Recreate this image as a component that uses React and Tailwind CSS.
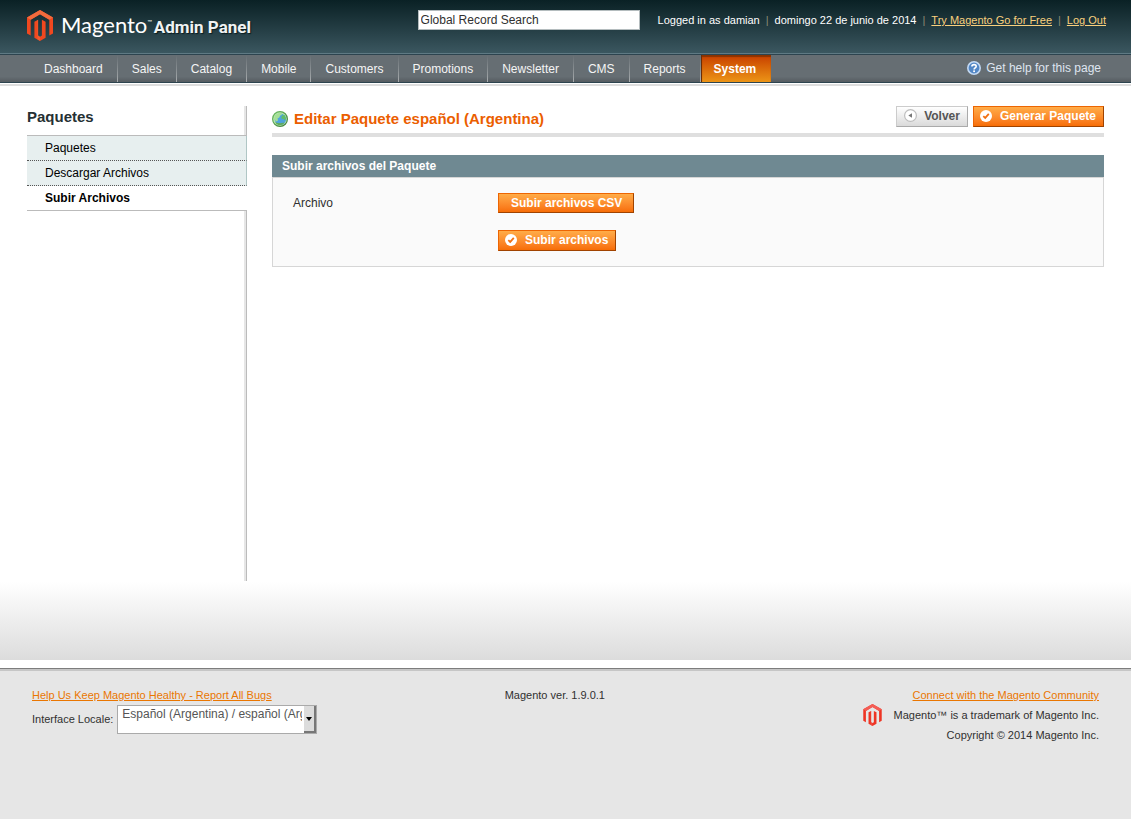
import { useState } from 'react'

const NAV_ITEMS = ['Dashboard', 'Sales', 'Catalog', 'Mobile', 'Customers', 'Promotions', 'Newsletter', 'CMS', 'Reports']

const SIDE_TABS = ['Paquetes', 'Descargar Archivos', 'Subir Archivos']

function MagentoMark({ className, roof, base }) {
  return (
    <svg viewBox="0 0 26 31" className={className} aria-hidden="true">
      <path d="M13 0 26 7.5V23.5L22.3 25.6V9.7L13 4.3 3.7 9.7V25.6L0 23.5V7.5Z" fill={base} />
      <path d="M13 0 26 7.5 22.3 9.7 13 4.3 3.7 9.7 0 7.5Z" fill={roof} />
      <path d="M7.4 11.8 11.1 9.7V25.6L13 26.8 14.9 25.6V9.7L18.6 11.8V27.7L13 31 7.4 27.7Z" fill={base} />
      <path d="M11.1 9.7V25.6L13 26.8V31L10.4 29.5V10.1Z" fill={roof} fillOpacity="0.5" />
    </svg>
  )
}

function GlobeIcon() {
  return (
    <svg viewBox="0 0 16 16" className="h-4 w-4" aria-hidden="true">
      <defs>
        <linearGradient id="globe-rim" x1="0" y1="0" x2="1" y2="1">
          <stop offset="0" stopColor="#6fbf66" />
          <stop offset="1" stopColor="#3c7a3a" />
        </linearGradient>
      </defs>
      <circle cx="8" cy="8" r="7.4" fill="#b9e8ab" stroke="url(#globe-rim)" strokeWidth="1.2" />
      <circle cx="8.4" cy="8.2" r="5.7" fill="#4fa3dc" />
      <path d="M2.5 6C3 3.500 6 1.800 9 2.200L10.300 3.300 8 4.800 7.300 6.500 5.500 7.500 6 9.300 4.800 10.500 2.500 9Z" fill="#a5e096" />
      <path d="M10.500 4.300 12.800 4.300 13.900 7.500 12.800 9.500 11.300 8 9.600 7.800 9.300 6Z" fill="#5fbd6a" />
      <path d="M3 11 5.500 12 8.500 12.300 12.500 11.500 10.800 13.400 7 14.200 4.500 13Z" fill="#62ab58" />
    </svg>
  )
}

function HelpIcon() {
  return (
    <svg viewBox="0 0 14 14" className="h-3.5 w-3.5" aria-hidden="true">
      <circle cx="7" cy="7" r="6.200" fill="#5287c6" stroke="#c3d9f3" strokeWidth="1.600" />
      <path d="M4.900 5.500C4.900 3 9.200 3 9.200 5.300 9.200 6.900 7.100 6.800 7.100 8.500" fill="none" stroke="#fff" strokeWidth="1.600" />
      <rect x="6.200" y="9.400" width="1.800" height="1.700" fill="#fff" />
    </svg>
  )
}

function CheckIcon() {
  return (
    <svg viewBox="0 0 12 12" className="h-3 w-3" aria-hidden="true">
      <circle cx="6" cy="6" r="6" fill="#fff" />
      <path d="M3.300 6.200 5.200 7.900 8.800 3.900" fill="none" stroke="#f27011" strokeWidth="1.800" />
    </svg>
  )
}

function BackIcon() {
  return (
    <svg viewBox="0 0 13 13" className="h-[13px] w-[13px]" aria-hidden="true">
      <circle cx="6.500" cy="6.500" r="5.900" fill="#fff" stroke="#bdbdbd" strokeWidth="1.200" />
      <path d="M4.300 6.500 8 4.200V8.800Z" fill="#777" />
    </svg>
  )
}

function OrangeButton({ icon, children }) {
  return (
    <button
      type="button"
      className={`flex items-center border border-t-[#ed6502] border-l-[#ed6502] border-r-[#a04300] border-b-[#a04300] bg-linear-to-b from-[#ffac47] to-[#f76d04] text-xs font-bold text-white ${
        icon ? 'h-[21px] gap-2 pr-[7px] pb-0.5 pl-1.5' : 'h-5 pr-[11px] pl-3'
      }`}
    >
      {icon}
      {children}
    </button>
  )
}

function Header() {
  const [query, setQuery] = useState('Global Record Search')

  return (
    <header>
      <div className="flex h-[53px] items-start justify-between bg-linear-to-b from-[#0a2125] to-[#3b5760] pr-[25px] pl-[27px]">
        <a href="#" className="flex pt-2.5 whitespace-nowrap text-white">
          <MagentoMark className="h-[31px] w-[26px]" roof="#f26b3d" base="#f1481f" />
          <span className="ml-2 flex items-baseline font-['Lato',sans-serif] text-[22px] leading-[30px]">
            Magento
            <span className="self-start pt-2 text-[6px] leading-2">™</span>
            <span className="ml-0.5 font-['Roboto',sans-serif] text-[17px] font-bold text-[#f0f3f3] text-shadow-[1px_1px_1px_#0a1c20]">
              Admin Panel
            </span>
          </span>
        </a>
        <div className="flex items-start gap-[18px] pt-2.5">
          <input
            aria-label="Global Record Search"
            value={query}
            onChange={(e) => setQuery(e.target.value)}
            className="h-5 w-[222px] border border-[#b4bcbe] bg-white px-0.5 text-xs text-[#303030]"
          />
          <div className="flex items-center gap-1.5 text-[11px] leading-5 whitespace-nowrap text-white">
            <span>Logged in as damian</span>
            <span className="text-[#8b8b74]">|</span>
            <span>domingo 22 de junio de 2014</span>
            <span className="text-[#8b8b74]">|</span>
            <a href="#" className="text-[#f9d07d] underline">Try Magento Go for Free</a>
            <span className="text-[#8b8b74]">|</span>
            <a href="#" className="text-[#f9d07d] underline">Log Out</a>
          </div>
        </div>
      </div>

      <div className="border-t border-[#5f7a84]">
        <nav className="flex h-[29px] items-stretch justify-between border-t border-b border-[#2d444f] bg-linear-to-b from-[#666e73] from-80% to-[#555c61] pr-[30px] pl-[30px] text-xs text-[#f5f5f5]">
          <ul className="flex">
            {NAV_ITEMS.map((item) => (
              <li key={item} className="flex">
                <a href="#" className="flex items-center px-3.5">{item}</a>
                <span className="w-px bg-linear-to-b from-[#666e73] to-[#a9adaf]" />
              </li>
            ))}
            <li className="flex">
              <a
                href="#"
                className="flex items-center border-l border-[#6b2d05] bg-linear-to-b from-[#c63c00] to-[#ec9416] pr-[15px] pl-3 font-bold text-white shadow-[inset_0_2px_1px_#8a3300]"
              >
                System
              </a>
            </li>
          </ul>
          <a href="#" className="flex items-center gap-[5px] pb-0.5 text-[#dfe5f0]">
            <HelpIcon />
            Get help for this page
          </a>
        </nav>
      </div>
      <div className="h-[3px] border-b-2 border-[#dedede] bg-white" />
    </header>
  )
}

function Sidebar() {
  return (
    <aside className="min-h-[475px] w-[220px] shrink-0 border-r border-[#bbb] shadow-[inset_-2px_0_0_#e6e6e6]">
      <h3 className="h-[29px] pt-px text-[15px] leading-5 font-bold text-[#253033]">Paquetes</h3>
      <ul className="-mr-px border-t border-b border-[#bbb] text-xs text-black">
        {SIDE_TABS.map((tab) =>
          tab === 'Subir Archivos' ? (
            <li key={tab}>
              <a href="#" className="block h-6 bg-white pl-[18px] leading-6 font-bold">{tab}</a>
            </li>
          ) : (
            <li key={tab}>
              <a href="#" className="block h-[25px] border-r border-b border-r-[#b0c6c5] border-b-[#555] bg-[#e7efef] pl-[18px] leading-6 [border-bottom-style:dotted]">
                {tab}
              </a>
            </li>
          )
        )}
      </ul>
    </aside>
  )
}

function Content() {
  return (
    <main className="min-w-0 flex-1">
      <div className="flex h-[31px] items-start justify-between border-b-4 border-[#dfdfdf]">
        <h1 className="flex items-center gap-1.5 pt-[3px] text-[15px] leading-5 font-bold text-[#eb5e00]">
          <GlobeIcon />
          Editar Paquete español (Argentina)
        </h1>
        <div className="flex gap-[5px]">
          <button
            type="button"
            className="flex h-[21px] items-center gap-[7px] border border-t-[#ccc] border-r-[#aaa] border-b-[#aaa] border-l-[#ccc] bg-linear-to-b from-white to-[#dadada] px-[7px] pb-0.5 text-xs font-bold text-[#555]"
          >
            <BackIcon />
            Volver
          </button>
          <OrangeButton icon={<CheckIcon />}>Generar Paquete</OrangeButton>
        </div>
      </div>

      <section className="mt-[18px] text-xs">
        <h2 className="bg-[#6f8992] px-2.5 py-0.5 leading-[18px] font-bold text-white">Subir archivos del Paquete</h2>
        <div className="flex border border-[#d6d6d6] bg-[#fafafa] px-5 py-[15px]">
          <div className="w-[205px] leading-5 text-[#303030]">Archivo</div>
          <div className="flex flex-col items-start gap-[17px]">
            <OrangeButton>Subir archivos CSV</OrangeButton>
            <OrangeButton icon={<CheckIcon />}>Subir archivos</OrangeButton>
          </div>
        </div>
      </section>
    </main>
  )
}

function Footer() {
  return (
    <footer className="flex-1 border-t border-[#7d7d7d] bg-[#e6e6e6] text-[11px] text-[#303030]">
      <div className="grid grid-cols-[32fr_34fr_34fr] border-t-2 border-[#c6c6c6] px-8 pt-3.5">
        <div>
          <a href="#" className="block leading-5 text-[#ea7601] underline">Help Us Keep Magento Healthy - Report All Bugs</a>
          <div className="flex items-center gap-1 whitespace-nowrap">
            <label htmlFor="locale">Interface Locale:</label>
            <div className="relative">
              <select
                id="locale"
                defaultValue="es_AR"
                className="block h-[29px] w-[200px] appearance-none border border-[#aaa] bg-white pr-3.5 pb-3 pl-1 text-xs text-[#555]"
              >
                <option value="es_AR">Español (Argentina) / español (Argentina)</option>
              </select>
              <span className="pointer-events-none absolute top-px right-px bottom-px flex w-3 items-center justify-center border-r-2 border-b-2 border-[#777] bg-[#dcdcdc]">
                <svg viewBox="0 0 6 4" className="h-1 w-1.5" aria-hidden="true">
                  <path d="M0 0H6L3 4Z" fill="#000" />
                </svg>
              </span>
            </div>
          </div>
        </div>
        <p className="text-center leading-5">Magento ver. 1.9.0.1</p>
        <div className="text-right leading-5">
          <a href="#" className="block text-[#ea7601] underline">Connect with the Magento Community</a>
          <p className="flex h-5 items-center justify-end gap-3">
            <MagentoMark className="h-[22px] w-[19px]" roof="#f45d55" base="#ee3524" />
            Magento™ is a trademark of Magento Inc.
          </p>
          <p>Copyright © 2014 Magento Inc.</p>
        </div>
      </div>
    </footer>
  )
}

export default function App() {
  return (
    <div className="flex min-h-screen flex-col bg-white font-['Liberation_Sans',Arial,sans-serif]">
      <Header />
      <div className="flex gap-[25px] bg-[linear-gradient(to_top,#dcdcdc,#fff_78px)] px-[27px] pt-5 pb-[79px]">
        <Sidebar />
        <Content />
      </div>
      <div className="h-2" />
      <Footer />
    </div>
  )
}
